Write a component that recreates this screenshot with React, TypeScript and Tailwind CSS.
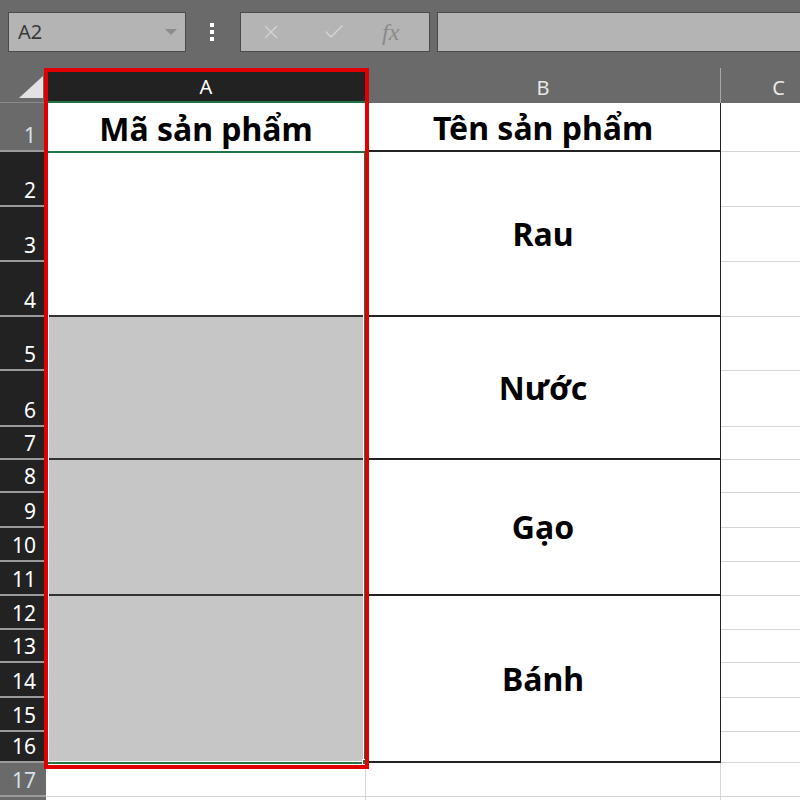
import { X, Check } from "lucide-react"

const font = "font-['Noto_Sans',sans-serif]"

const rowHeads = [
  { n: "1", pos: "row-start-2", sel: false },
  { n: "2", pos: "row-start-3", sel: true },
  { n: "3", pos: "row-start-4", sel: true },
  { n: "4", pos: "row-start-5", sel: true },
  { n: "5", pos: "row-start-6", sel: true },
  { n: "6", pos: "row-start-7", sel: true },
  { n: "7", pos: "row-start-8", sel: true },
  { n: "8", pos: "row-start-9", sel: true },
  { n: "9", pos: "row-start-10", sel: true },
  { n: "10", pos: "row-start-11", sel: true },
  { n: "11", pos: "row-start-12", sel: true },
  { n: "12", pos: "row-start-13", sel: true },
  { n: "13", pos: "row-start-14", sel: true },
  { n: "14", pos: "row-start-15", sel: true },
  { n: "15", pos: "row-start-16", sel: true },
  { n: "16", pos: "row-start-17", sel: true },
  { n: "17", pos: "row-start-18", sel: false },
  { n: "", pos: "row-start-19", sel: false },
]

const colC = [
  "row-start-2", "row-start-3", "row-start-4", "row-start-5", "row-start-6", "row-start-7",
  "row-start-8", "row-start-9", "row-start-10", "row-start-11", "row-start-12", "row-start-13",
  "row-start-14", "row-start-15", "row-start-16", "row-start-17", "row-start-18", "row-start-19",
]

// merged groups in column A / B
const groups = [
  { pos: "row-start-3 row-span-3", fill: "bg-white", name: "Rau" },
  { pos: "row-start-6 row-span-3", fill: "bg-[#c6c6c6]", name: "Nước" },
  { pos: "row-start-9 row-span-4", fill: "bg-[#c6c6c6]", name: "Gạo" },
  { pos: "row-start-13 row-span-5", fill: "bg-[#c6c6c6]", name: "Bánh" },
]

function Toolbar() {
  return (
    <div className="flex h-[68px] items-start bg-[#6a6a6a] pl-[8px] pt-[12px]">
      {/* name box */}
      <div className="flex h-[40px] w-[178px] items-center justify-between border border-[#4a4a4a] bg-[#b4b4b4] pl-[9px] pr-[8px]">
        <span className={`${font} text-[20px] leading-none text-[#3a3a3a]`}>A2</span>
        <svg width="12" height="7" viewBox="0 0 12 7">
          <path d="M0 0 L12 0 L6 6 Z" fill="#8c8c8c" />
        </svg>
      </div>
      <div className="ml-[24px] mt-[11px] flex flex-col gap-[3px]">
        <div className="h-[4px] w-[4px] bg-white" />
        <div className="h-[4px] w-[4px] bg-white" />
        <div className="h-[4px] w-[4px] bg-white" />
      </div>
      {/* formula buttons */}
      <div className="ml-[26px] flex h-[40px] w-[190px] items-center border border-[#4a4a4a] bg-[#b4b4b4]">
        <X size={22} strokeWidth={1.5} className="ml-[19px] text-[#d3d3d3]" />
        <Check size={24} strokeWidth={1.5} className="ml-[40px] text-[#d3d3d3]" />
        <span className="ml-[36px] font-['Liberation_Serif',serif] text-[24px] italic leading-none text-[#8a8a8a]">
          fx
        </span>
      </div>
      <div className="ml-[7px] h-[40px] flex-1 border border-r-0 border-[#4a4a4a] bg-[#b4b4b4]" />
    </div>
  )
}

export default function App() {
  return (
    <div className={`${font} h-[800px] w-[800px] overflow-hidden bg-[#6a6a6a]`}>
      <Toolbar />
      <div className="grid grid-cols-[46px_320px_355px_79px] grid-rows-[35px_49px_55px_55px_55px_54px_56px_33px_33px_35px_34px_34px_34px_33px_35px_34px_31px_34px_40px] bg-white">
        {/* header row */}
        <div className="col-start-1 row-start-1 flex items-end justify-end border-b border-[#8a8a8a] bg-[#6a6a6a] pb-[4px] pr-[3px]">
          <svg width="24" height="22" viewBox="0 0 24 22">
            <path d="M24 0 L24 22 L0 22 Z" fill="#e2e2e2" />
          </svg>
        </div>
        <div className="col-start-2 row-start-1 flex items-end justify-center border-b-2 border-[#217346] bg-[#222222] pb-[4px] text-[20px] leading-none text-white">
          A
        </div>
        <div className="col-start-3 row-start-1 flex items-end justify-center border-r border-[#a8a8a8] bg-[#6a6a6a] pb-[5px] text-[20px] leading-none text-[#e8e8e8]">
          B
        </div>
        <div className="col-start-4 row-start-1 flex items-end justify-center bg-[#6a6a6a] pb-[5px] pl-[36px] text-[20px] leading-none text-[#e8e8e8]">
          C
        </div>

        {/* row headers */}
        {rowHeads.map((r) => (
          <div
            key={r.pos}
            className={`col-start-1 ${r.pos} flex items-end justify-end border-b-2 border-[#9a9a9a] pb-[4px] pr-[10px] text-[21px] leading-none ${
              r.sel ? "bg-[#222222] text-white" : "bg-[#6a6a6a] text-[#d6e0ea]"
            }`}
          >
            {r.n}
          </div>
        ))}

        {/* column A */}
        <div className="col-start-2 row-start-2 flex items-center justify-center pt-[2px] text-[32px] font-bold leading-none text-black">
          Mã sản phẩm
        </div>
        {groups.map((g, i) => (
          <div
            key={g.name}
            className={`col-start-2 ${g.pos} ${g.fill} ${i < 3 ? "border-b-2 border-[#333]" : ""}`}
          />
        ))}
        <div className="col-start-2 row-start-18 border-b border-r border-[#d6d6d6]" />
        <div className="col-start-2 row-start-19 border-r border-[#d6d6d6]" />

        {/* column B */}
        <div className="col-start-3 row-start-2 flex items-center justify-center border-b-2 border-r border-[#222] pt-[2px] text-[32px] font-bold leading-none text-black">
          Tên sản phẩm
        </div>
        {groups.map((g) => (
          <div
            key={g.name}
            className={`col-start-3 ${g.pos} flex items-center justify-center border-b-2 border-r border-[#222] text-[32px] font-bold leading-none text-black`}
          >
            {g.name}
          </div>
        ))}
        <div className="col-start-3 row-start-18 border-b border-r border-[#d6d6d6]" />
        <div className="col-start-3 row-start-19 border-r border-[#d6d6d6]" />

        {/* column C */}
        {colC.map((p) => (
          <div key={p} className={`col-start-4 ${p} border-b border-[#d6d6d6]`} />
        ))}

        {/* selection A2:A16 */}
        <div className="relative z-10 col-start-2 row-start-3 row-end-18 -mb-[1px] -mt-[1px] border-2 border-[#217346]">
          <div className="h-full w-full border border-white" />
          <div className="absolute -bottom-[3px] -right-[4px] h-[6px] w-[6px] border border-white bg-[#217346]" />
        </div>

        {/* red highlight around column A */}
        <div className="relative z-20 col-start-2 row-start-1 row-end-18 -mb-[6px] -ml-[2px] -mr-[3px] border-4 border-[#e00000]" />
      </div>
    </div>
  )
}
